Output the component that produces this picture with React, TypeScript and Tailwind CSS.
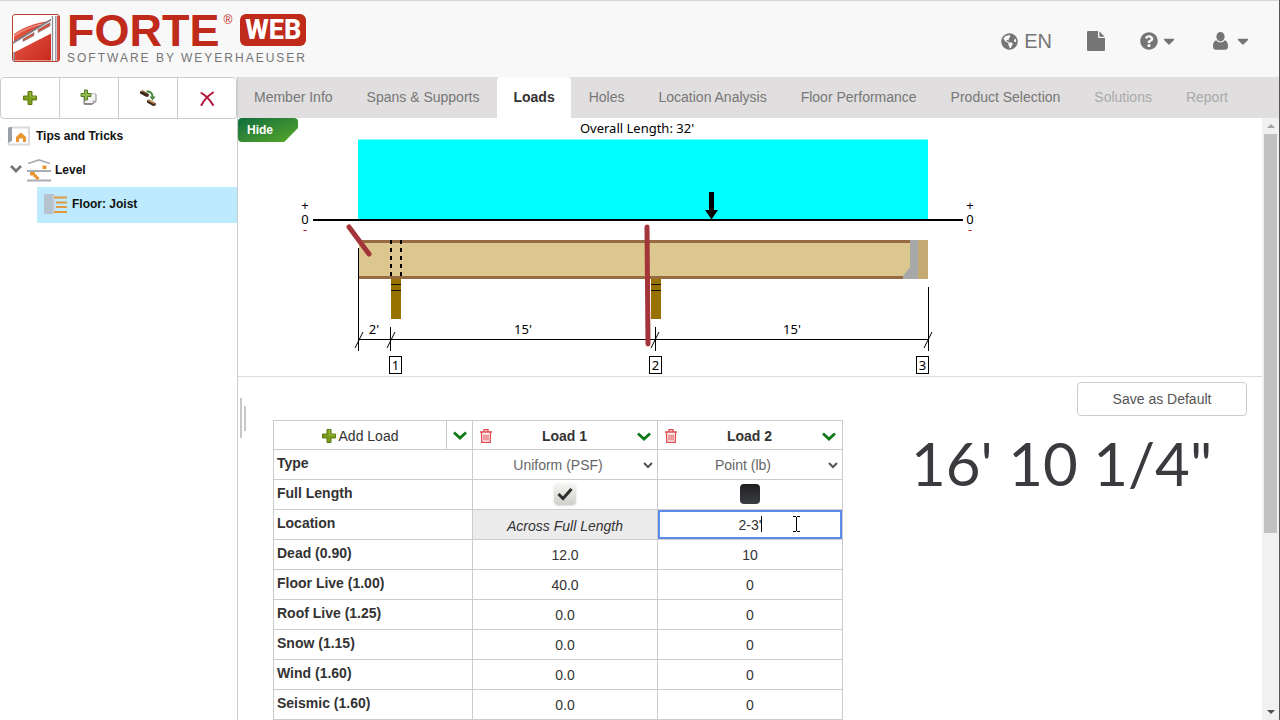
import { useState } from "react";
import type { ReactNode } from "react";
import { FaCaretDown, FaGlobeAmericas, FaQuestionCircle } from "react-icons/fa";
import clsx from "clsx";

const TABS = [
  { label: "Member Info" },
  { label: "Spans & Supports" },
  { label: "Loads", active: true },
  { label: "Holes" },
  { label: "Location Analysis" },
  { label: "Floor Performance" },
  { label: "Product Selection" },
  { label: "Solutions", disabled: true },
  { label: "Report", disabled: true },
];

const LOAD_ROWS = [
  { label: "Dead (0.90)", values: ["12.0", "10"] },
  { label: "Floor Live (1.00)", values: ["40.0", "0"] },
  { label: "Roof Live (1.25)", values: ["0.0", "0"] },
  { label: "Snow (1.15)", values: ["0.0", "0"] },
  { label: "Wind (1.60)", values: ["0.0", "0"] },
  { label: "Seismic (1.60)", values: ["0.0", "0"] },
];

function PlusIcon() {
  return (
    <svg width={14} height={14} viewBox="0 0 14 14" aria-hidden>
      <path
        d="M5 .5h4V5h4.500v4H9v4.500H5V9H.5V5H5z"
        fill="#7d9c1a"
        stroke="#5c7a12"
        strokeWidth={1}
      />
      <path d="M6 1.500h1.500V6H13" fill="none" stroke="#98b93c" strokeWidth={1} />
    </svg>
  );
}

function CopyPlusIcon() {
  return (
    <svg width={18} height={18} viewBox="0 0 18 18" aria-hidden>
      <path d="M3.500 8V14.500Q3.500 16 5 16H12L16.500 12.500V6Q16.500 4.500 15 4.500H8z" fill="#8b8b8d" />
      <path d="M5 6Q5 5 6 5H14.500Q15.500 5 15.500 6V11.500L12.500 14H6Q5 14 5 13z" fill="#f3f3f1" />
      <path d="M12.500 14V11.500H15.500z" fill="#b9b9b9" />
      <path d="M4.500 1h3v3.500H11v3H7.500V11h-3V7.500H1v-3h3.500z" fill="#93b94c" stroke="#55802a" />
    </svg>
  );
}

function ReplaceIcon() {
  return (
    <svg width={18} height={18} viewBox="0 0 18 18" aria-hidden>
      <path d="M1 2.500L3.500 1.500 10 5 9.500 7.500 7.500 8 1 4.500z" fill="#3d2a1c" />
      <path d="M1.500 2.500L4 2 9 5" fill="none" stroke="#a07a50" />
      <path d="M8 11.500L10 10.500 17 14.500 16.500 16.500 14 17 8 13.500z" fill="#3d2a1c" />
      <path d="M9 11.500L10.500 11.500 15.500 14.500" fill="none" stroke="#c08a50" strokeWidth={1.500} />
      <path d="M7.500 2.500C11 2 13.500 4 13.500 8" fill="none" stroke="#4c8a3c" strokeWidth={2} />
      <path d="M10.500 7.500h6L13.500 11.500z" fill="#4c8a3c" />
    </svg>
  );
}

function DeleteIcon() {
  return (
    <svg width={16} height={16} viewBox="0 0 16 16" aria-hidden>
      <path
        d="M2.500 3C6.500 5.500 11 10 14 15M14 2.500C9.500 5.500 5 10 2.500 15"
        fill="none"
        stroke="#b3123a"
        strokeWidth={2}
        strokeLinecap="round"
      />
    </svg>
  );
}

function TrashIcon() {
  return (
    <svg width={12} height={14} viewBox="0 0 12 14" fill="none" stroke="#e0484c" aria-hidden>
      <path d="M0 3h12M4 2.500V.700h4V2.500" strokeWidth={1.300} />
      <path d="M1.500 3.500L1.800 13.300H10.200L10.500 3.500" strokeWidth={1.300} />
      <path d="M4 5.500v6M6 5.500v6M8 5.500v6" strokeWidth={1.100} />
    </svg>
  );
}

function GreenChevron() {
  return (
    <svg width={14} height={9} viewBox="0 0 14 9" aria-hidden>
      <path d="M1 1.500L7 7 13 1.500" fill="none" stroke="#117a17" strokeWidth={2.800} />
    </svg>
  );
}

function FileIcon() {
  return (
    <svg width={18} height={20} viewBox="0 0 18 20" fill="#757575" aria-hidden>
      <path d="M1.200 0H11V6Q11 7 12 7H18V18.800Q18 20 16.800 20H1.200Q0 20 0 18.800V1.200Q0 0 1.200 0z" />
      <path d="M12.300 .300L17.700 5.700H12.300z" />
    </svg>
  );
}

function UserIcon() {
  return (
    <svg width={15} height={18} viewBox="0 0 15 18" fill="#757575" aria-hidden>
      <path d="M7.500 0C9.800 0 11.600 1.900 11.600 4.600S9.800 9.500 7.500 9.500 3.400 7.300 3.400 4.600 5.200 0 7.500 0z" />
      <path d="M3.300 8.300C4.300 9.700 5.800 10.500 7.500 10.500S10.700 9.700 11.700 8.300C14 8.700 15 11 15 14.500 15 16.600 13.800 17.800 12 17.800H3C1.200 17.800 0 16.600 0 14.500 0 11 1 8.700 3.300 8.300z" />
    </svg>
  );
}

function Logo() {
  return (
    <a href="#" className="flex items-start gap-[7px]" aria-label="Forte Web">
      <svg width={48} height={48} viewBox="0 0 48 48" aria-hidden>
        <defs>
          <linearGradient id="logo-red" x1="0" y1="0" x2="1" y2="1">
            <stop offset="0%" stopColor="#e8604c" />
            <stop offset="100%" stopColor="#c8281c" />
          </linearGradient>
        </defs>
        <rect x={0.500} y={0.500} width={47} height={47} rx={2.500} fill="#fff" stroke="#b8402c" />
        <path d="M2 20C13 12 26 8 40 7V46.500H2z" fill="url(#logo-red)" />
        <path d="M2 22C12 15 22 11 36 9" fill="none" stroke="#f3a294" strokeWidth={1.200} />
        <path d="M1 29L40 5V19L1 39z" fill="#fff" />
        <path d="M1 29L40 5" fill="none" stroke="#7b7b80" strokeWidth={1.500} />
        <path d="M11 25L22 18.500V21.500L11 27.500z" fill="#d84a38" stroke="#8d8d90" strokeWidth={0.800} />
        <path d="M26 15.500L38 8.500V12L26 18.500z" fill="#d84a38" stroke="#8d8d90" strokeWidth={0.800} />
        <path d="M2 38V47" stroke="#8d8d90" strokeWidth={1.500} />
        <path d="M39 2H45V47H39z" fill="#fff" />
        <path d="M40.500 2V47M43.800 2V47" stroke="#8b8f98" strokeWidth={1.300} />
        <path d="M46 2V47" stroke="#d8402f" strokeWidth={1.800} />
      </svg>
      <span className="flex flex-col">
        <span className="flex h-8 items-center">
          <span className="pt-px text-[45px] leading-8 font-bold text-[#bf2a1a]">FORTE</span>
          <span className="ml-1 self-start text-[12px] leading-3 text-[#bf2a1a]">®</span>
          <span className="ml-2 flex h-8 w-[66px] items-center justify-center rounded-md bg-[#bf2a1a] font-[Roboto,sans-serif] text-[27px] leading-8 font-extrabold text-white">
            WEB
          </span>
        </span>
        <span className="mt-[6px] text-[12px] leading-3 tracking-[2px] text-[#757575]">
          SOFTWARE BY WEYERHAEUSER
        </span>
      </span>
    </a>
  );
}

function Header() {
  return (
    <header className="flex h-[77px] shrink-0 items-start justify-between border-t border-[#d6d4d4] bg-[#f8f8f8] pt-[13px] pr-[27px] pl-3">
      <Logo />
      <nav className="flex h-[54px] items-center gap-[35px] text-[#757575]" aria-label="Account">
        <button type="button" className="flex items-center gap-[6px] text-[20px] leading-6">
          <FaGlobeAmericas size={17} />
          EN
        </button>
        <button type="button" aria-label="Documents">
          <FileIcon />
        </button>
        <button type="button" className="flex items-center gap-[2px]" aria-label="Help">
          <FaQuestionCircle size={18} />
          <FaCaretDown size={18} />
        </button>
        <button type="button" className="flex items-center gap-[6px]" aria-label="User">
          <UserIcon />
          <FaCaretDown size={18} />
        </button>
      </nav>
    </header>
  );
}

function ToolButton({ label, children }: { label: string; children: ReactNode }) {
  return (
    <button
      type="button"
      aria-label={label}
      className="flex flex-1 items-center justify-center border-r border-[#ccc] last:border-r-0"
    >
      {children}
    </button>
  );
}

function Sidebar() {
  return (
    <aside className="flex w-[238px] shrink-0 flex-col border-r border-[#ccc] text-[12px] leading-4 font-bold text-[#111]">
      <div className="flex h-[42px] rounded border border-[#ccc] bg-white">
        <ToolButton label="Add">
          <PlusIcon />
        </ToolButton>
        <ToolButton label="Copy">
          <CopyPlusIcon />
        </ToolButton>
        <ToolButton label="Replace">
          <ReplaceIcon />
        </ToolButton>
        <ToolButton label="Delete">
          <DeleteIcon />
        </ToolButton>
      </div>
      <ul>
        <li className="flex h-[34px] items-center gap-[6px] pl-[7px]">
          <svg width={23} height={20} viewBox="0 0 23 20" aria-hidden>
            <path d="M5 1.500H22V18.500H2" fill="none" stroke="#d8dadd" strokeWidth={2} />
            <path d="M1 2.500Q1 1 2.500 1H5V15L1 17z" fill="#9aa0aa" />
            <path d="M1 17Q1 19 4 19" fill="none" stroke="#d8dadd" strokeWidth={1.500} />
            <path d="M9 16V11L14 6.500 19 11V16H16V12.500H12V16z" fill="#e8952f" />
          </svg>
          Tips and Tricks
        </li>
        <li className="flex h-[34px] items-center pl-[10px]">
          <svg width={12} height={12} viewBox="0 0 12 12" aria-hidden>
            <path d="M1 2L6 7 11 2" fill="none" stroke="#777" strokeWidth={2.800} />
          </svg>
          <svg width={24} height={24} viewBox="0 0 24 24" className="mr-1 ml-[5px]" aria-hidden>
            <path d="M1 5.500L12 2 23 5.500" fill="none" stroke="#a9adb3" strokeWidth={1.800} />
            <path d="M0 13H24M0 22.500H24" stroke="#a9adb3" strokeWidth={2} />
            <path d="M15.500 7.500h4v3.500h-4z" fill="#e8952f" />
            <path d="M3.500 14.500H7.500V17H9.500V19H11.500V21H9V19H7V17H3.500z" fill="#e8952f" stroke="#e8952f" />
          </svg>
          Level
        </li>
        <li className="ml-[37px] flex h-9 items-center gap-[5px] bg-[#bdeafc] pb-[2px] pl-[7px]">
          <svg width={23} height={20} viewBox="0 0 23 20" aria-hidden>
            <path d="M0 0H9V20H0z" fill="#b5c3cf" />
            <path d="M9 0H11V20H9z" fill="#c9d3dc" />
            <path d="M10 3.500H23M12 8.500H23M12 13H23M10 18H23" stroke="#e09a40" strokeWidth={2} />
          </svg>
          Floor: Joist
        </li>
      </ul>
    </aside>
  );
}

function Support({ x }: { x: number }) {
  return (
    <g>
      <rect x={x} y={161} width={10} height={40} fill="#987200" />
      <path d={`M${x} 166.500h10M${x} 172.500h10`} stroke="#111" />
    </g>
  );
}

function BoxedNumber({ x, value }: { x: number; value: number }) {
  return (
    <g>
      <rect x={x} y={238.500} width={12} height={17} fill="#fff" stroke="#000" />
      <text x={x + 6} y={252} textAnchor="middle">
        {value}
      </text>
    </g>
  );
}

function BeamDiagram() {
  return (
    <svg
      width={690}
      height={258}
      viewBox="0 0 690 258"
      className="shrink-0 font-['Noto_Sans',sans-serif] text-[13px]"
      role="img"
      aria-label="Load diagram"
    >
      <text x={339} y={15} textAnchor="middle">
        Overall Length: 32'
      </text>

      {/* uniform load and zero line */}
      <rect x={60} y={21.500} width={570} height={79.500} fill="#00ffff" />
      <rect x={15} y={101} width={650} height={2} />
      <path d="M411 74h5v18h4L413.500 101.500 407 92h4z" />
      {[7, 672].map((x) => (
        <g key={x} textAnchor="middle">
          <text x={x} y={92}>+</text>
          <text x={x} y={106}>0</text>
          <text x={x} y={116} fill="#c0202c">-</text>
        </g>
      ))}

      {/* joist, hanger and header */}
      <rect x={61} y={122} width={552} height={39} fill="#dcc88e" />
      <path d="M61 123.500H613M61 159.500H613" stroke="#966b42" strokeWidth={3} />
      <path d="M612 122H620V161H605V158L612 149z" fill="#a8a8a8" />
      <rect x={620} y={122} width={10} height={39} fill="#c4aa74" />
      <path d="M93 122V161M103 122V161" stroke="#000" strokeWidth={2} strokeDasharray="4 4" />
      <Support x={93} />
      <Support x={353} />

      {/* dimension lines */}
      <path
        d="M61 221.500H630M60.500 130V233M92.500 209V233M357.500 209V233M630.500 169V233M57 230L65 214M89 230L97 214M353 230L361 214M626 230L634 214"
        fill="none"
        stroke="#000"
      />
      <text x={76} y={216} textAnchor="middle">2'</text>
      <text x={225} y={216} textAnchor="middle">15'</text>
      <text x={494} y={216} textAnchor="middle">15'</text>
      <BoxedNumber x={91.500} value={1} />
      <BoxedNumber x={351.500} value={2} />
      <BoxedNumber x={618.500} value={3} />

      {/* hand-drawn marks */}
      <path
        d="M51 109L71 136M349 109L350 226"
        fill="none"
        stroke="#a3343a"
        strokeWidth={5}
        strokeLinecap="round"
      />
    </svg>
  );
}

function LoadHeader({ name }: { name: string }) {
  return (
    <th scope="col" className="border border-[#ccc] p-0">
      <div className="flex items-center justify-between pt-[2px] pr-[6px] pl-[7px]">
        <button type="button" aria-label={`Delete ${name}`}>
          <TrashIcon />
        </button>
        {name}
        <button type="button" aria-label={`${name} options`}>
          <GreenChevron />
        </button>
      </div>
    </th>
  );
}

function TypeCell({ label, value, options }: { label: string; value: string; options: string[] }) {
  return (
    <td className="border border-[#ccc] p-0">
      <div className="relative">
        <select
          aria-label={label}
          defaultValue={value}
          className="h-7 w-full appearance-none pr-[14px] text-center text-[#666] [text-align-last:center]"
        >
          {options.map((option) => (
            <option key={option}>{option}</option>
          ))}
        </select>
        <svg
          width={10}
          height={7}
          viewBox="0 0 10 7"
          className="pointer-events-none absolute top-[11px] right-1"
          aria-hidden
        >
          <path d="M1 1L5 5 9 1" fill="none" stroke="#555" strokeWidth={2} />
        </svg>
      </div>
    </td>
  );
}

function RowLabel({ children }: { children: ReactNode }) {
  return (
    <th
      scope="row"
      colSpan={2}
      className="border border-[#ccc] p-0 pb-[3px] pl-[3px] text-left font-bold"
    >
      {children}
    </th>
  );
}

function LoadsTable() {
  const [location, setLocation] = useState("2-3'");

  return (
    <table className="w-[570px] shrink-0 table-fixed border-collapse bg-white text-[14px] leading-5 text-[#333]">
      <colgroup>
        <col className="w-[173px]" />
        <col className="w-[26px]" />
        <col />
        <col />
      </colgroup>
      <thead>
        <tr className="h-[29px]">
          <td className="border border-[#ccc] p-0">
            <button
              type="button"
              className="flex w-full items-center justify-center gap-[3px] pt-[2px]"
            >
              <PlusIcon />
              Add Load
            </button>
          </td>
          <td className="border border-[#ccc] p-0">
            <button
              type="button"
              className="flex w-full items-center justify-center"
              aria-label="Add load options"
            >
              <GreenChevron />
            </button>
          </td>
          <LoadHeader name="Load 1" />
          <LoadHeader name="Load 2" />
        </tr>
      </thead>
      <tbody>
        <tr className="h-[30px]">
          <RowLabel>Type</RowLabel>
          <TypeCell label="Load 1 type" value="Uniform (PSF)" options={["Uniform (PSF)", "Point (lb)"]} />
          <TypeCell label="Load 2 type" value="Point (lb)" options={["Uniform (PSF)", "Point (lb)"]} />
        </tr>
        <tr className="h-[30px]">
          <RowLabel>Full Length</RowLabel>
          <td className="border border-[#ccc] p-0 pb-[2px]">
            <label className="relative mx-auto flex size-[22px] items-center justify-center">
              <input
                type="checkbox"
                defaultChecked
                aria-label="Load 1 full length"
                className="peer size-[22px] appearance-none rounded bg-linear-to-b from-[#f6f6f4] to-[#cfd0ca] shadow"
              />
              <svg
                width={16}
                height={14}
                viewBox="0 0 16 14"
                className="absolute opacity-0 peer-checked:opacity-100"
                aria-hidden
              >
                <path d="M1.500 7L6 11.500 14.500 2" fill="none" stroke="#2e2e2e" strokeWidth={3} />
              </svg>
            </label>
          </td>
          <td className="border border-[#ccc] p-0 pb-[2px]">
            <input
              type="checkbox"
              aria-label="Load 2 full length"
              className="mx-auto block size-5 appearance-none rounded bg-linear-to-b from-[#1f1f22] to-[#3c3d42]"
            />
          </td>
        </tr>
        <tr className="h-[30px]">
          <RowLabel>Location</RowLabel>
          <td className="border border-[#ccc] bg-[#ececec] p-0 pt-[2px] text-center italic">
            Across Full Length
          </td>
          <td className="border border-[#ccc] p-0">
            <div className="relative">
              <input
                type="text"
                aria-label="Load 2 location"
                value={location}
                onChange={(e) => setLocation(e.target.value)}
                className="block h-[29px] w-full border-2 border-[#5b8cec] text-center outline-none"
              />
              {/* text caret and mouse pointer */}
              <span className="pointer-events-none absolute top-[6px] left-[103px] h-4 w-px bg-black" />
              <svg
                width={7}
                height={16}
                viewBox="0 0 7 16"
                className="pointer-events-none absolute top-[6px] left-[135px]"
                aria-hidden
              >
                <path d="M0 .5H3M4 .5H7M3.500 1V15M0 15.500H3M4 15.500H7" stroke="#000" />
              </svg>
            </div>
          </td>
        </tr>
        {LOAD_ROWS.map((row) => (
          <tr key={row.label} className="h-[30px]">
            <RowLabel>{row.label}</RowLabel>
            {row.values.map((value, i) => (
              <td key={i} className="border border-[#ccc] p-0">
                <input
                  type="text"
                  aria-label={`${row.label} load ${i + 1}`}
                  defaultValue={value}
                  className="block h-7 w-full pt-px text-center outline-none"
                />
              </td>
            ))}
          </tr>
        ))}
      </tbody>
    </table>
  );
}

function ScrollBar() {
  return (
    <div className="flex w-[17px] shrink-0 flex-col items-center bg-[#f1f1f1]" aria-hidden>
      <svg width={16} height={16} viewBox="0 0 16 16" className="shrink-0">
        <path d="M4 10L8 6 12 10z" fill="#a3a3a3" />
      </svg>
      <div className="min-h-0 w-[13px] flex-1">
        <div className="h-[70%] bg-[#c1c1c1]" />
      </div>
      <svg width={16} height={16} viewBox="0 0 16 16" className="shrink-0">
        <path d="M4 6L8 10 12 6z" fill="#505050" />
      </svg>
    </div>
  );
}

function LoadsPage() {
  return (
    <div className="flex min-w-0 flex-1 flex-col">
      <section className="flex h-[259px] shrink-0 items-start border-b border-[#ddd]">
        <button
          type="button"
          className="h-6 w-[60px] shrink-0 rounded-sm bg-linear-to-br from-[#0b6e3c] to-[#55a81f] pr-4 text-[12px] leading-6 font-bold text-white [clip-path:polygon(0_0,100%_0,100%_42%,77%_100%,0_100%)]"
        >
          Hide
        </button>
        <BeamDiagram />
      </section>
      <section className="flex">
        <div className="flex w-[35px] shrink-0 items-start gap-[2px] pt-[21px] pl-[2px]" aria-hidden>
          <span className="h-10 w-[2px] bg-[#c8c8c8]" />
          <span className="mt-2 h-[25px] w-[2px] bg-[#c8c8c8]" />
        </div>
        <div className="min-w-0 flex-1">
          <div className="flex justify-end pt-[5px] pr-[15px] pb-1">
            <button
              type="button"
              className="h-[34px] w-[170px] rounded border border-[#ccc] text-[14px] leading-5 text-[#555]"
            >
              Save as Default
            </button>
          </div>
          <div className="flex items-start">
            <LoadsTable />
            <p className="ml-[68px] pt-2 font-[Lato,sans-serif] text-[60px] leading-[70px] whitespace-nowrap text-[#3a3b3e]">
              16' 10 1/4"
            </p>
          </div>
        </div>
      </section>
    </div>
  );
}

export default function App() {
  return (
    <div className="flex h-screen flex-col overflow-hidden border-r border-[#555] bg-white font-['Liberation_Sans',Arial,sans-serif]">
      <Header />
      <div className="flex min-h-0 flex-1">
        <Sidebar />
        <main className="flex min-w-0 flex-1 flex-col">
          <nav
            className="flex h-[41px] shrink-0 gap-[2px] bg-[#e0dede] text-[14px] leading-5"
            aria-label="Member"
          >
            {TABS.map((tab) => (
              <a
                key={tab.label}
                href="#"
                aria-disabled={tab.disabled}
                className={clsx(
                  "flex items-center px-4 pb-[2px] whitespace-nowrap",
                  tab.active && "rounded-t bg-white font-bold text-[#333]",
                  tab.disabled && "text-[#aaa]",
                  !tab.active && !tab.disabled && "text-[#777]"
                )}
              >
                {tab.label}
              </a>
            ))}
          </nav>
          <div className="flex min-h-0 flex-1">
            <LoadsPage />
            <ScrollBar />
          </div>
        </main>
      </div>
    </div>
  );
}
